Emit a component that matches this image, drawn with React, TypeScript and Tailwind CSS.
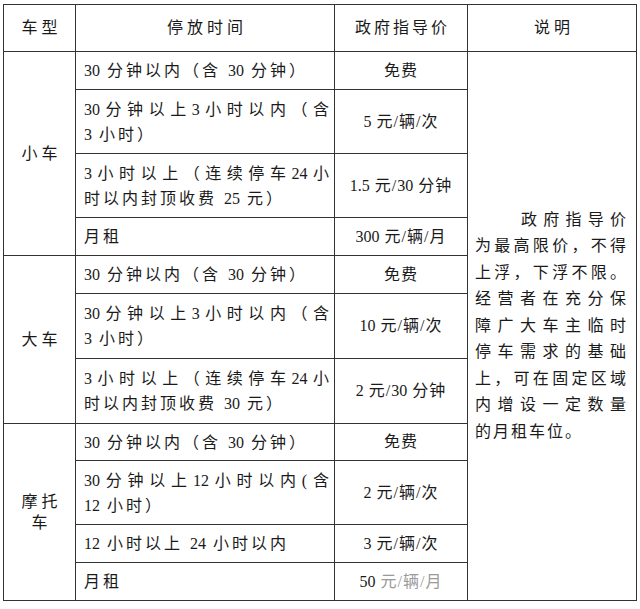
import React from "react";

// keep latin/digit runs tight, CJK spaced
const T = ({ s }: { s: string }) => {
  const parts = s.split(/([0-9.]+)/);
  return (
    <>
      {parts.map((p, i) =>
        /^[0-9.]+$/.test(p) ? (
          <span key={i} className="tracking-[0px]">
            {p}
          </span>
        ) : (
          <React.Fragment key={i}>{p}</React.Fragment>
        )
      )}
    </>
  );
};

// evenly distributed line: digit runs stay together, each CJK char is its own item
const J = ({ s }: { s: string }) => {
  const tokens = s.match(/[0-9.]+|\(|[^\s0-9.(]/g) || [];
  return (
    <div className="flex justify-between whitespace-nowrap">
      {tokens.map((t, i) => (
        <span key={i}>{t}</span>
      ))}
    </div>
  );
};

const L = ({ s }: { s: string }) => (
  <div className="tracking-[3px]">
    <T s={s} />
  </div>
);

const Td = ({
  children,
  className = "",
  rowSpan,
}: {
  children?: React.ReactNode;
  className?: string;
  rowSpan?: number;
}) => (
  <td rowSpan={rowSpan} className={`border border-[#333] align-middle p-0 ${className}`}>
    {children}
  </td>
);

const TimeCell = ({ children }: { children: React.ReactNode }) => (
  <Td className="pl-2 pr-[5px] leading-[25px]">{children}</Td>
);

const Price = ({ children }: { children: React.ReactNode }) => (
  <Td className="text-center tracking-[1px]">{children}</Td>
);

const DJ = ({ s }: { s: string }) => (
  <div className="text-justify [text-align-last:justify] whitespace-nowrap">{s}</div>
);

export default function App() {
  return (
    <div className="w-[640px] h-[609px] bg-white pt-[4px] pl-[3px] text-[16px] text-[#1a1a1a] font-['Liberation_Serif','Noto_Sans_CJK_SC',serif]">
      <table className="table-fixed border-collapse w-[633px]">
        <colgroup>
          <col className="w-[72px]" />
          <col className="w-[259px]" />
          <col className="w-[133px]" />
          <col className="w-[169px]" />
        </colgroup>
        <tbody>
          <tr className="h-[47px]">
            <Td className="text-center tracking-[4px] pl-[4px]">车型</Td>
            <Td className="text-center tracking-[4px] pl-[4px]">停放时间</Td>
            <Td className="text-center tracking-[3px] pl-[3px]">政府指导价</Td>
            <Td className="text-center tracking-[4px] pl-[4px]">说明</Td>
          </tr>
          {/* 小车 */}
          <tr className="h-[38px]">
            <Td rowSpan={4} className="text-center tracking-[4px] pl-[4px]">小车</Td>
            <TimeCell>
              <L s="30 分钟以内（含 30 分钟）" />
            </TimeCell>
            <Price>免费</Price>
            <Td rowSpan={11} className="pl-[7px] pr-[10px] text-[16px] leading-[26.5px]">
              <div className="pl-[46px]">
                <DJ s="政府指导价" />
              </div>
              <DJ s="为最高限价，不得" />
              <DJ s="上浮，下浮不限。" />
              <DJ s="经营者在充分保" />
              <DJ s="障广大车主临时" />
              <DJ s="停车需求的基础" />
              <DJ s="上，可在固定区域" />
              <DJ s="内增设一定数量" />
              <div className="tracking-[2px]">的月租车位。</div>
            </Td>
          </tr>
          <tr className="h-[64px]">
            <TimeCell>
              <J s="30 分钟以上 3 小时以内（含" />
              <L s="3 小时）" />
            </TimeCell>
            <Price>
              <T s="5 元/辆/次" />
            </Price>
          </tr>
          <tr className="h-[64px]">
            <TimeCell>
              <J s="3 小时以上（连续停车 24 小" />
              <L s="时以内封顶收费 25 元）" />
            </TimeCell>
            <Price>
              <T s="1.5 元/30 分钟" />
            </Price>
          </tr>
          <tr className="h-[38px]">
            <TimeCell>
              <L s="月租" />
            </TimeCell>
            <Price>
              <T s="300 元/辆/月" />
            </Price>
          </tr>
          {/* 大车 */}
          <tr className="h-[38px]">
            <Td rowSpan={3} className="text-center tracking-[4px] pl-[4px]">大车</Td>
            <TimeCell>
              <L s="30 分钟以内（含 30 分钟）" />
            </TimeCell>
            <Price>免费</Price>
          </tr>
          <tr className="h-[65px]">
            <TimeCell>
              <J s="30 分钟以上 3 小时以内（含" />
              <L s="3 小时）" />
            </TimeCell>
            <Price>
              <T s="10 元/辆/次" />
            </Price>
          </tr>
          <tr className="h-[65px]">
            <TimeCell>
              <J s="3 小时以上（连续停车 24 小" />
              <L s="时以内封顶收费 30 元）" />
            </TimeCell>
            <Price>
              <T s="2 元/30 分钟" />
            </Price>
          </tr>
          {/* 摩托车 */}
          <tr className="h-[37px]">
            <Td rowSpan={4} className="text-center tracking-[4px] pl-[4px] leading-[21px]">
              <div>摩托</div>
              <div>车</div>
            </Td>
            <TimeCell>
              <L s="30 分钟以内（含 30 分钟）" />
            </TimeCell>
            <Price>免费</Price>
          </tr>
          <tr className="h-[64px]">
            <TimeCell>
              <J s="30 分钟以上 12 小时以内(含" />
              <L s="12 小时）" />
            </TimeCell>
            <Price>
              <T s="2 元/辆/次" />
            </Price>
          </tr>
          <tr className="h-[38px]">
            <TimeCell>
              <L s="12 小时以上 24 小时以内" />
            </TimeCell>
            <Price>
              <T s="3 元/辆/次" />
            </Price>
          </tr>
          <tr className="h-[38px]">
            <TimeCell>
              <L s="月租" />
            </TimeCell>
            <Price>
              <span className="tracking-[0px]">50</span> <span className="text-[#9a9a9a]">元/辆/月</span>
            </Price>
          </tr>
        </tbody>
      </table>
    </div>
  );
}
